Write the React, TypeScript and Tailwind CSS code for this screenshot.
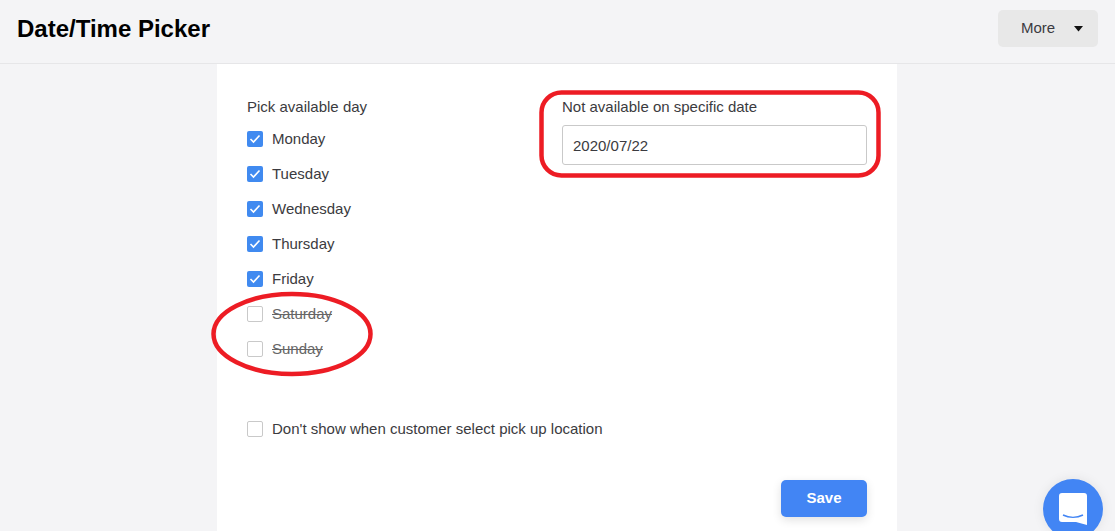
const days = [
  { name: "Monday", on: true },
  { name: "Tuesday", on: true },
  { name: "Wednesday", on: true },
  { name: "Thursday", on: true },
  { name: "Friday", on: true },
  { name: "Saturday", on: false },
  { name: "Sunday", on: false },
];

function Check({ on }: { on: boolean }) {
  if (!on) {
    return <span className="mb-[2px] h-4 w-4 shrink-0 rounded-[2px] border border-[#c9c9c9] bg-white" />;
  }
  return (
    <span className="mb-[2px] flex h-4 w-4 shrink-0 items-center justify-center rounded-[2px] bg-[#408af0]">
      <svg width="12" height="10" viewBox="0 0 12 10" fill="none">
        <path d="M1.500 5l3 3 6-6.500" stroke="white" strokeWidth="1.600" />
      </svg>
    </span>
  );
}

export default function App() {
  return (
    <div className="relative h-[531px] overflow-hidden bg-[#f4f4f6] font-['Liberation_Sans',Arial,sans-serif] text-[#3b3b40]">
      {/* Top bar */}
      <header className="flex h-16 items-start justify-between border-b border-[#e6e6e8] px-[17px] pt-[10px]">
        <h1 className="text-2xl leading-[38px] font-bold text-black">Date/Time Picker</h1>
        <button
          type="button"
          className="flex h-[37px] w-[100px] items-center rounded-[5px] bg-[#e8e8e8] pl-[23px] text-[15px]"
        >
          More
          <svg className="ml-[19px]" width="9" height="6" viewBox="0 0 9 6">
            <path d="M0 0h9L4.500 5.500z" fill="#111" />
          </svg>
        </button>
      </header>

      {/* Settings card */}
      <main className="ml-[217px] h-[467px] w-[680px] bg-white px-[30px] pt-[34px]">
        <div className="grid grid-cols-[315px_305px]">
          <div>
            <div className="text-[15px] leading-[18px]">Pick available day</div>
            <ul className="mt-[6px]">
              {days.map((d) => (
                <li key={d.name} className="flex h-[35px] items-center gap-[9px] text-[15px]">
                  <Check on={d.on} />
                  <span className={d.on ? "" : "text-[#666] line-through"}>{d.name}</span>
                </li>
              ))}
            </ul>
          </div>
          <div>
            <div className="text-[15px] leading-[18px]">Not available on specific date</div>
            <div className="mt-[9px] flex h-10 items-center rounded-[3px] border border-[#c9c9c9] px-[10px] pt-[2px] text-[15px]">
              2020/07/22
            </div>
          </div>
        </div>

        <label className="mt-[45px] flex h-[35px] items-center gap-[9px] text-[15px]">
          <Check on={false} />
          Don't show when customer select pick up location
        </label>

        <div className="mt-[33px] flex justify-end">
          <button
            type="button"
            className="h-[37px] w-[86px] rounded-[5px] bg-[#4285f4] text-[15px] font-bold text-white shadow-[0_3px_10px_rgba(0,0,0,0.12)]"
          >
            Save
          </button>
        </div>
      </main>

      {/* Red annotation marks */}
      <svg className="pointer-events-none absolute left-0 top-0" width="1115" height="531" fill="none">
        <rect x="541.500" y="92.500" width="337" height="83" rx="20" stroke="#ed1c24" strokeWidth="4.500" />
        <ellipse cx="292" cy="334" rx="78.500" ry="40" stroke="#ed1c24" strokeWidth="4.500" />
      </svg>

      {/* Chat launcher */}
      <div className="absolute left-[1043px] top-[479px] flex h-[60px] w-[60px] items-start justify-center rounded-full bg-[#4285f4] pt-[14px] shadow-[0_0_12px_rgba(0,0,0,0.08)]">
        <svg width="28" height="32" viewBox="0 0 28 32">
          <path d="M3 0h22a3 3 0 0 1 3 3v29l-11-3H3a3 3 0 0 1-3-3V3a3 3 0 0 1 3-3z" fill="white" />
          <path d="M4 22c6 3 14 3 20 0" stroke="#4285f4" strokeWidth="1.500" fill="none" />
        </svg>
      </div>
    </div>
  );
}
